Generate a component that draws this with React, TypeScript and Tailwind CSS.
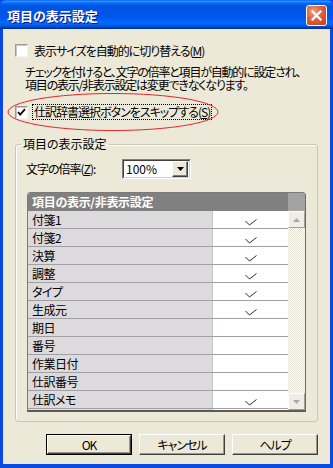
import React from "react";

const rows: { name: string; on: boolean }[] = [
  { name: "付箋1", on: true },
  { name: "付箋2", on: true },
  { name: "決算", on: true },
  { name: "調整", on: true },
  { name: "タイプ", on: true },
  { name: "生成元", on: true },
  { name: "期日", on: false },
  { name: "番号", on: false },
  { name: "作業日付", on: false },
  { name: "仕訳番号", on: false },
  { name: "仕訳メモ", on: true },
  { name: "", on: false },
];

function Tick() {
  return (
    <svg width="12" height="7" viewBox="0 0 12 7">
      <polyline points="0.5,2 4.5,6 11.5,0.5" fill="none" stroke="#2a2a2a" strokeWidth="1" />
    </svg>
  );
}

function CheckBox({ checked }: { checked?: boolean }) {
  return (
    <div className="w-[13px] h-[13px] shrink-0 bg-white border border-t-[#9a9a9a] border-l-[#9a9a9a] border-r-[#f4f4f4] border-b-[#f4f4f4] shadow-[inset_1px_1px_0_#c8c8c8] flex items-center justify-center">
      {checked && (
        <svg width="9" height="9" viewBox="0 0 9 9">
          <polyline points="1,4 3.2,6.6 8,1.2" fill="none" stroke="#000" strokeWidth="1.8" />
        </svg>
      )}
    </div>
  );
}

function Btn({ label, def }: { label: string; def?: boolean }) {
  return (
    <div className={`w-[86px] h-[21px] ${def ? "border border-black" : ""}`}>
      <div className="w-full h-full bg-[#ECE9D8] border border-t-white border-l-white border-r-[#404040] border-b-[#404040] shadow-[inset_-1px_-1px_0_#9a9888] flex items-center justify-center text-[12px] text-black leading-none">
        {label}
      </div>
    </div>
  );
}

function ScrollBtn({ up }: { up?: boolean }) {
  return (
    <div className="w-[17px] h-[17px] bg-[#EEEDE6] border border-t-white border-l-white border-r-[#a09f98] border-b-[#a09f98] flex items-center justify-center">
      <svg width="7" height="4" viewBox="0 0 7 4">
        {up ? <polygon points="0,4 7,4 3.5,0" fill="#a8a8a8" /> : <polygon points="0,0 7,0 3.5,4" fill="#a8a8a8" />}
      </svg>
    </div>
  );
}

export default function App() {
  return (
    <div className="w-[333px] h-[468px] flex flex-col bg-[#0A49E3] font-['Noto_Sans_CJK_JP',sans-serif] [font-feature-settings:'palt'] text-black">
      {/* title bar */}
      <div className="h-[29px] shrink-0 flex items-center pl-[7px] pr-[6px] rounded-t-[6px] bg-[linear-gradient(to_bottom,#0058EE_0%,#3593FF_4%,#288EFF_6%,#127DFF_8%,#036FFC_10%,#0262EE_14%,#0057E5_20%,#0054E3_24%,#0055EB_56%,#005BF5_66%,#026AFE_76%,#0062EF_86%,#0052D6_92%,#0040AB_94%,#003092_100%)]">
        <div className="text-white font-bold text-[13px] leading-none [text-shadow:1px_1px_0_#0A1883] mt-[1px]">
          項目の表示設定
        </div>
        <div className="ml-auto w-[21px] h-[21px] mt-[1px] rounded-[3px] border border-white bg-[radial-gradient(circle_at_35%_30%,#F0A080_0%,#E0603A_45%,#C23A16_100%)] flex items-center justify-center">
          <svg width="11" height="11" viewBox="0 0 11 11">
            <path d="M1.5 1.5 L9.5 9.5 M9.5 1.5 L1.5 9.5" stroke="#fff" strokeWidth="2.2" strokeLinecap="square" />
          </svg>
        </div>
      </div>

      {/* client */}
      <div className="flex-1 mx-[3px] mb-[4px] bg-[#ECE9D8] relative text-[12px] tracking-[-1px]">
        <div className="pt-[15px] pl-[12px] pr-[12px]">
          <div className="flex items-center h-[13px]">
            <CheckBox />
            <span className="ml-[6px] leading-none whitespace-nowrap">
              表示サイズを自動的に切り替える(<u>M</u>)
            </span>
          </div>
          <div className="mt-[8px] pl-[10px] leading-[13px] whitespace-nowrap tracking-[-1.2px]">
            <div>チェックを付けると、文字の倍率と項目が自動的に設定され、</div>
            <div>項目の表示/非表示設定は変更できなくなります。</div>
          </div>
          <div className="mt-[13px] flex items-center h-[16px]">
            <CheckBox checked />
            <span className="ml-[4px] h-[16px] px-[1px] border border-dotted border-black flex items-center leading-none whitespace-nowrap">
              仕訳辞書選択ボタンをスキップする(<u>S</u>)
            </span>
          </div>

          <fieldset className="mt-[17px] border border-[#C9C6B6] rounded-[3px] px-0 pt-[8px] pb-[9px] shadow-[inset_1px_1px_0_#fff]">
            <legend className="ml-[5px] px-[2px] h-[14px] leading-[14px] tracking-normal">項目の表示設定</legend>
            <div className="pl-[10px]">
              <div className="flex items-center h-[20px]">
                <div className="w-[96px] leading-none whitespace-nowrap">
                  文字の倍率(<u>Z</u>):
                </div>
                <div className="w-[69px] h-[20px] bg-white border border-t-[#808080] border-l-[#808080] border-r-white border-b-white flex">
                  <div className="flex-1 border border-t-[#404040] border-l-[#404040] border-r-[#D4D0C8] border-b-[#D4D0C8] flex items-center pl-[2px] pr-[1px]">
                    <span className="flex-1 leading-none tracking-normal">100%</span>
                    <div className="w-[16px] h-[16px] bg-[#ECE9D8] border border-t-white border-l-white border-r-[#404040] border-b-[#404040] shadow-[inset_-1px_-1px_0_#808080] flex items-center justify-center">
                      <svg width="7" height="4" viewBox="0 0 7 4">
                        <polygon points="0,0 7,0 3.5,4" fill="#000" />
                      </svg>
                    </div>
                  </div>
                </div>
              </div>

              {/* table */}
              <div className="mt-[13px] ml-[1px] w-[279px] rounded-t-[4px] border border-[#7a7a7a] border-b-2 border-b-[#5a5a5a] border-r-[#6a6a6a] overflow-hidden">
                <div className="h-[18px] flex bg-[#808080]">
                  <div className="flex-1 flex items-center pl-[4px] text-white font-bold leading-none tracking-[-0.3px]">
                    項目の表示/非表示設定
                  </div>
                  <div className="w-[17px] bg-[#A3A3A3]" />
                </div>
                <div className="h-[199px] flex">
                  <div className="flex-1 overflow-hidden">
                    {rows.map((r, i) => (
                      <div key={i} className="h-[18px] flex border-b border-[#A0A0A0]">
                        <div className="w-[185px] bg-[#DCDADC] border-r border-[#C4C4C4] flex items-center pl-[4px] leading-none tracking-[-0.5px]">
                          {r.name}
                        </div>
                        <div className="flex-1 bg-white flex items-end justify-center pb-[2px]">
                          {r.on && <Tick />}
                        </div>
                      </div>
                    ))}
                  </div>
                  <div className="w-[17px] flex flex-col">
                    <ScrollBtn up />
                    <div className="flex-1 [background:repeating-conic-gradient(#ffffff_0%_25%,#E6E3D6_0%_50%)_0_0/2px_2px]" />
                    <ScrollBtn />
                  </div>
                </div>
              </div>
            </div>
          </fieldset>

          <div className="mt-[12px] flex justify-end gap-[7px]">
            <Btn label="OK" def />
            <Btn label="キャンセル" />
            <Btn label="ヘルプ" />
          </div>
        </div>

        {/* red annotation ellipse */}
        <svg className="absolute left-0 top-0 pointer-events-none" width="327" height="435">
          <ellipse cx="110" cy="83" rx="105" ry="18.5" fill="none" stroke="#E8242A" strokeWidth="1" />
        </svg>
      </div>
    </div>
  );
}
